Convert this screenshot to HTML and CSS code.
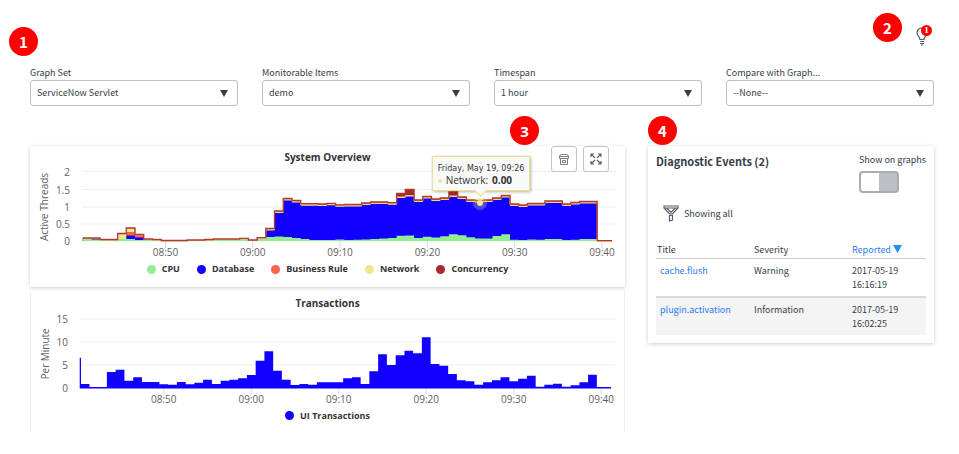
FILE: index.html
```html
<!DOCTYPE html>
<html lang="en">
<head>
<meta charset="utf-8">
<title>Performance Dashboard</title>
<link rel="stylesheet" href="styles.css">
</head>
<body>
<div class="page">
  <span class="marker marker-filters">1</span>
  <header class="topbar">
    <span class="marker">2</span>
    <button class="bulb" type="button" aria-label="Diagnostic events">
      <svg width="14" height="20" viewBox="0 0 14 20" fill="none" stroke="#59616a" stroke-width="1.2">
        <path d="M4 12.5C4 10 1 8.800 1 5.800A5 5 0 0 1 11 5.800C11 8.800 8 10 8 12.500Z"/>
        <path d="M4 14.500H8M4 16.500H8M5 18H7"/>
      </svg>
      <span class="badge">1</span>
    </button>
  </header>

  <form class="filters">
    <div class="field">
      <label for="graph-set">Graph Set</label>
      <select id="graph-set"><option>ServiceNow Servlet</option></select>
    </div>
    <div class="field">
      <label for="items">Monitorable Items</label>
      <select id="items"><option>demo</option></select>
    </div>
    <div class="field">
      <label for="timespan">Timespan</label>
      <select id="timespan"><option>1 hour</option></select>
    </div>
    <div class="field">
      <label for="compare">Compare with Graph...</label>
      <select id="compare"><option>--None--</option></select>
    </div>
  </form>

  <main class="content">
    <div class="charts">
      <section class="card chart">
        <span class="marker marker-tools">3</span>
        <h2>System Overview</h2>
        <div class="tools">
          <button type="button" aria-label="Save graph">
            <svg width="10" height="11" viewBox="0 0 10 11" fill="none" stroke="#7b8087">
              <path d="M.5 2.500Q.5 .5 2.500 .5H7.500Q9.500 .5 9.500 2.500V4.500H.5ZM1.500 4.500V10.500H8.500V4.500M.5 2.500H9.500M3.500 6.500H6.500V8.500H3.500Z"/>
            </svg>
          </button>
          <button type="button" aria-label="Expand graph">
            <svg width="12" height="12" viewBox="0 0 12 12" fill="none" stroke="#59616a" stroke-width="1.200">
              <path d="M1 4V1H4M8 1H11V4M11 8V11H8M4 11H1V8M1 1L5 5M11 1L7 5M11 11L7 7M1 11L5 7"/>
            </svg>
          </button>
        </div>
        <svg class="plot" id="overview" viewBox="0 0 595 94" role="img" aria-label="Active threads over time"></svg>
        <div class="tooltip">
          <div class="tip-date">Friday, May 19, 09:26</div>
          <div class="tip-value"><i class="tip-dot"></i><span>Network:</span><b>0.00</b></div>
        </div>
        <ul class="legend">
          <li><i class="dot cpu"></i>CPU</li>
          <li><i class="dot database"></i>Database</li>
          <li><i class="dot rule"></i>Business Rule</li>
          <li><i class="dot network"></i>Network</li>
          <li><i class="dot concurrency"></i>Concurrency</li>
        </ul>
      </section>
      <section class="card chart chart-cut">
        <h2>Transactions</h2>
        <svg class="plot" id="transactions" viewBox="0 0 595 94" role="img" aria-label="Transactions per minute"></svg>
        <ul class="legend">
          <li><i class="dot database"></i>UI Transactions</li>
        </ul>
      </section>
    </div>

    <section class="card events">
      <span class="marker marker-events">4</span>
      <div class="events-head">
        <h1>Diagnostic Events (2)</h1>
        <label class="switch">Show on graphs<input type="checkbox"></label>
      </div>
      <div class="showing">
        <svg width="16" height="17" viewBox="0 0 16 17" fill="none" stroke="#59616a" stroke-width="1.200">
          <path d="M1 1H15V3L9.500 9H6.500L1 3ZM1 3H15M3.500 3L8 7.500L12.500 3M6.500 10.500H9.500V15L6.500 16Z"/>
        </svg>
        Showing all
      </div>
      <table>
        <thead>
          <tr><th>Title</th><th>Severity</th><th class="sorted">Reported <svg width="9" height="8" viewBox="0 0 9 8"><path d="M0 0H9L4.500 8Z" fill="#278efc"/></svg></th></tr>
        </thead>
        <tbody>
          <tr><td><a href="#flush">cache.flush</a></td><td>Warning</td><td>2017-05-19 16:16:19</td></tr>
          <tr><td><a href="#activation">plugin.activation</a></td><td>Information</td><td>2017-05-19 16:02:25</td></tr>
        </tbody>
      </table>
    </section>
  </main>
</div>
<script src="charts.js"></script>
</body>
</html>
```
FILE: styles.css
```css
* { box-sizing: border-box; }

body {
  margin: 0;
  background: #fff;
  color: #343d47;
  font: 9px/14px "Noto Sans CJK JP", "Open Sans", sans-serif;
}

h1, h2, ul { margin: 0; padding: 0; }

.page {
  position: relative;
  padding: 13px 25px 20px 30px;
}

.marker {
  display: grid;
  place-items: center;
  width: 29px;
  height: 29px;
  border-radius: 50%;
  background: #f00;
  color: #fff;
  font-size: 15px;
  font-weight: 700;
  line-height: 20px;
}

.marker-filters { position: absolute; left: 9px; top: 27px; }
.marker-tools { position: absolute; right: 86px; top: -30px; z-index: 2; }
.marker-events { position: absolute; left: 0; top: -30px; }

.topbar {
  display: flex;
  justify-content: flex-end;
  gap: 14px;
  height: 53px;
}

.bulb {
  position: relative;
  width: 18px;
  height: 34px;
  padding: 14px 0 0;
  border: 0;
  background: none;
  text-align: left;
}

.bulb svg { display: block; }

.badge {
  position: absolute;
  right: 2px;
  top: 12px;
  width: 11px;
  height: 11px;
  border-radius: 50%;
  background: #f00;
  color: #fff;
  font: 700 9px/11px "Liberation Serif", serif;
  text-align: center;
}

.filters {
  display: grid;
  grid-template-columns: repeat(4, 1fr);
  gap: 24px;
}

.field label { display: block; height: 14px; line-height: 14px; }

select {
  display: block;
  width: 100%;
  height: 26px;
  padding: 0 24px 0 6px;
  border: 1px solid #bdc0c4;
  border-radius: 3px;
  appearance: none;
  background: #fff url("data:image/svg+xml,%3Csvg xmlns='http://www.w3.org/2000/svg' width='8' height='7'%3E%3Cpath d='M0 0H8L4 7Z' fill='%23343d47'/%3E%3C/svg%3E") no-repeat right 9px center;
  color: inherit;
  font: inherit;
}

.content {
  display: grid;
  grid-template-columns: 595fr 286fr;
  gap: 23px;
  align-items: start;
  margin-top: 40px;
}

.charts { display: grid; gap: 4px; }

.card {
  position: relative;
  background: #fff;
  box-shadow: 0 1px 4px rgba(0, 0, 0, 0.2);
}

.chart {
  padding: 4px 0 11px;
  font-family: "Open Sans", sans-serif;
}

.chart-cut {
  padding: 5px 0 9px;
  box-shadow: none;
  border: solid #ededed;
  border-width: 0 1px;
}

.chart h2 {
  height: 16px;
  color: #333;
  font-size: 10px;
  line-height: 14px;
  text-align: center;
}

.plot { display: block; width: 100%; overflow: visible; }
.plot text { fill: #606060; font-size: 10px; }

.legend {
  display: flex;
  justify-content: center;
  gap: 17px;
  padding-top: 2px;
  list-style: none;
  color: #333;
  font-weight: 700;
}

.chart-cut h2 { height: 15px; }
.chart-cut .legend { padding-top: 4px; }

.legend li { display: flex; align-items: center; gap: 6px; }

.dot { width: 9px; height: 9px; border-radius: 50%; }
.cpu { background: #90ee90; }
.database { background: #10f; }
.rule { background: #ff6347; }
.network { background: #f0e68c; }
.concurrency { background: #a52a2a; }

.tools {
  position: absolute;
  top: 0;
  right: 16px;
  z-index: 1;
  display: flex;
  gap: 6px;
}

.tools button {
  display: grid;
  place-items: center;
  width: 26px;
  height: 26px;
  padding: 0;
  border: 1px solid #c0c3c7;
  border-radius: 3px;
  background: #fff;
}

.tooltip {
  position: absolute;
  left: 67.5%;
  top: 10px;
  width: 98px;
  height: 35px;
  padding: 6px 0 0 5px;
  border: 1px solid #eee08a;
  background: #f9f9f9;
  box-shadow: 1px 1px 3px rgba(0, 0, 0, 0.3);
  color: #333;
  line-height: 12px;
  white-space: nowrap;
}

.tooltip::after {
  content: "";
  position: absolute;
  left: 43px;
  bottom: -5px;
  width: 8px;
  height: 8px;
  border: solid #eee08a;
  border-width: 0 1px 1px 0;
  background: #f9f9f9;
  transform: rotate(45deg);
}

.tip-date { font: 8px/12px "DejaVu Sans", sans-serif; }
.tip-value { display: flex; align-items: center; gap: 4px; font-size: 10px; line-height: 11px; }
.tip-dot { width: 4px; height: 4px; border-radius: 50%; background: #f0e68c; }

.events { padding: 7px 8px 8px; }
.events-head { display: flex; justify-content: space-between; }
.events h1 { font-size: 11px; line-height: 16px; }
.switch { display: block; }

.switch input {
  display: block;
  width: 40px;
  height: 22px;
  margin: 4px 0 0;
  border: 2px solid #a9adb1;
  border-radius: 4px;
  appearance: none;
  background: linear-gradient(90deg, #fff 50%, #bcc0c4 50%);
}

.showing {
  display: flex;
  align-items: center;
  gap: 5px;
  padding: 12px 0 20px 7px;
}

table { width: 100%; border-collapse: collapse; table-layout: fixed; }
th, td { padding: 0; text-align: left; font-weight: 400; vertical-align: top; }
th:first-child, td:first-child { width: 98px; }
th:nth-child(2) { width: 98px; }
th { border-bottom: 1px solid #c9ccd0; line-height: 16px; }
th:first-child { padding-left: 1px; }
td { padding: 5px 20px 4px 0; }
td:first-child { padding: 5px 0 4px 4px; }
tbody tr + tr { border-top: 2px solid #d9dadc; background: #f4f4f4; }
a { color: #2a7bf5; text-decoration: none; }
.sorted { color: #2a7bf5; }
```
FILE: charts.js
```js
// Series are bar heights above the baseline, one entry per minute.
const total = [3, 3, 1.5, 1.5, 7.5, 13, 6.5, 2, 1.5, 0.5, 0.5, 0.5, 1, 1, 1.5, 2, 2, 2, 2.7, 1, 3.3, 12.5, 30, 42.5, 40.5, 37.3, 37.3, 37, 37.7, 36.2, 36.5, 36.5, 38, 39, 39, 38.3, 47.5, 51.5, 41, 44.5, 42, 43, 49, 44, 41, 40.5, 41, 43, 45.5, 37, 36, 37.5, 37.5, 40, 40, 37, 38.5, 39.5, 39.5, 0.3, 0.3];
const cpu = [2, 1.5, 1, 1, 2, 2, 1, 1, 0.5, 0, 0, 0, 0.5, 0.5, 1, 1.2, 1.2, 1.2, 2, 0.5, 2.5, 4, 4.5, 4, 3, 2, 1, 1, 1, 1.5, 1, 1.2, 1.5, 2, 2.5, 3, 5.3, 5.5, 3, 4.3, 3.5, 4.7, 6.7, 5.7, 3.7, 2.5, 2.5, 5, 6.7, 1.2, 1, 1.5, 1.3, 2, 2, 1, 1.3, 2, 2, 0, 0];
const transactions = [3.7, 0.7, 0.7, 15.7, 18, 7, 10.5, 5.7, 5.7, 3.5, 3, 5.7, 3.5, 5, 8, 3.7, 7, 8, 9.5, 12.7, 27, 36.5, 17, 8, 2.7, 3.7, 3, 5.5, 5.5, 5.5, 9.5, 10.5, 3.7, 16.5, 33.7, 22.7, 32.7, 37, 34.7, 50.7, 23.7, 22, 13.7, 7.5, 6.5, 3, 5.5, 7.5, 10.5, 6.5, 9, 12, 1, 3, 4, 1, 2.5, 5.5, 13, 0.7, 0.7];

const database = total.map((v, i) => {
  if (i < 20) return i === 5 ? 5.5 : i === 6 ? 3.5 : i < 2 ? 2 : 0;
  if (i > 58) return 0;
  return ({ 36: 43, 37: 44.5, 42: 44 })[i] || v - 2;
});
const network = total.map((v, i) => i > 20 && i < 59 ? database[i] + 1 : v - 0.5);

function steps(values, x0, step, base, end) {
  let d = "";
  values.forEach((v, i) => {
    const x = (x0 + i * step).toFixed(1);
    d += (i ? "H" + x : "M" + x + " " + (base - v)) + "V" + (base - v).toFixed(1);
  });
  return d + "H" + end;
}

function frame(o) {
  let s = "";
  o.yTicks.forEach(([label, y]) => {
    s += `<path d="M${o.left} ${y}H586" stroke="#efefef"/><text x="${o.labelX}" y="${y + 4}" text-anchor="end">${label}</text>`;
  });
  o.xTicks.forEach(([label, x]) => {
    s += `<path d="M${x} ${o.base}V${o.base + 7}" stroke="#d3dbee"/><text x="${x}" y="${o.base + 15}" text-anchor="middle">${label}</text>`;
  });
  const mid = o.base - 34;
  s += `<text transform="translate(18 ${mid}) rotate(-90)" text-anchor="middle">${o.title}</text>`;
  return s;
}

function area(values, color, x0, step, base, end) {
  return `<path d="${steps(values, x0, step, base, end)}V${base}H${x0}Z" fill="${color}"/>`;
}

const times = ["08:50", "09:00", "09:10", "09:20", "09:30", "09:40"];

const a = [52.7, 8.72, 75, 582];
document.getElementById("overview").innerHTML =
  frame({
    left: 52, labelX: 40, base: 75, title: "Active Threads",
    yTicks: [["2", 5.5], ["1.5", 23.5], ["1", 41], ["0.5", 58], ["0", 75]],
    xTicks: times.map((t, i) => [t, 135.5 + i * 87.3])
  }) +
  area(total, "#a52a2a", ...a) +
  area(network, "#f0e68c", ...a) +
  `<path d="M96.300 70H105V66H96.300ZM105 69H114V73H105Z" fill="#ff6347"/>` +
  area(database, "#10f", ...a) +
  area(cpu, "#90ee90", ...a) +
  `<path d="${steps(network, ...a)}" fill="none" stroke="#ecc77c" stroke-width="1"/>` +
  `<path d="${steps(total, ...a)}" fill="none" stroke="#b0382c" stroke-width="1.300"/>` +
  `<circle cx="450" cy="37" r="7" fill="#f0e68c" opacity="0.300"/><circle cx="450" cy="37" r="3" fill="#f0e68c"/>`;

const b = [49.8, 8.78, 77, 582];
document.getElementById("transactions").innerHTML =
  frame({
    left: 49, labelX: 37, base: 77, title: "Per Minute",
    yTicks: [["15", 8], ["10", 31], ["5", 54], ["0", 77]],
    xTicks: times.map((t, i) => [t, 133.2 + i * 87.8])
  }) +
  area(transactions, "#10f", ...b) +
  `<path d="M49.500 47V77H582" fill="none" stroke="#10f" stroke-width="1.300"/>`;
```
